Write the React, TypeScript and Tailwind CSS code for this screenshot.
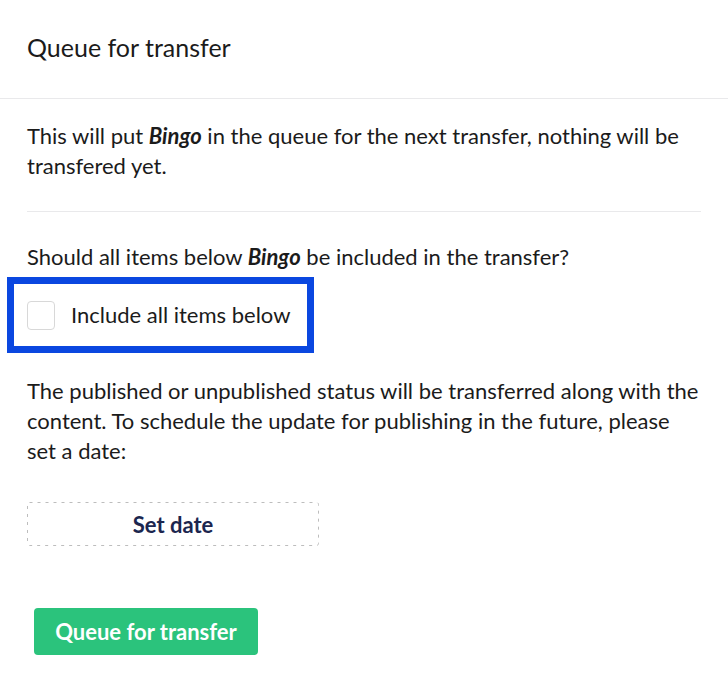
import { useState } from 'react';

export default function App() {
  const [includeAll, setIncludeAll] = useState(false);

  return (
    <div className="w-[728px] h-[675px] bg-white font-['Lato','Open_Sans',sans-serif] text-[#1b1b1b] overflow-hidden">
      <div className="h-[99px] flex items-center pl-[27px] pb-[4px] border-b border-[#e9e9eb]">
        <h1 className="text-[25px] leading-[30px] font-normal">Queue for transfer</h1>
      </div>

      <div className="px-[27px] pt-[22px]">
        <p className="text-[22px] leading-[30px]">
          This will put <b className="italic font-bold">Bingo</b> in the queue for the next transfer, nothing will be transfered yet.
        </p>

        <hr className="mt-[30px] border-0 border-t border-[#e9e9eb]" />

        <p className="mt-[30px] text-[22px] leading-[30px]">
          Should all items below <b className="italic font-bold">Bingo</b> be included in the transfer?
        </p>

        {/* checkbox row with tour highlight over it */}
        <div className="relative mt-[5px] h-[76px] flex items-center">
          <label className="flex items-center cursor-pointer">
            <input
              type="checkbox"
              checked={includeAll}
              onChange={e => setIncludeAll(e.target.checked)}
              className="appearance-none w-[28px] h-[29px] rounded-[4px] border border-[#d8d8d8] bg-white"
            />
            <span className="ml-[16px] text-[22px] leading-[30px]">Include all items below</span>
          </label>
          <div className="pointer-events-none absolute left-[-20px] top-0 w-[307px] h-[76px] border-[7px] border-[#0a47e0]" />
        </div>

        <p className="mt-[23px] text-[22px] leading-[30px]">
          The published or unpublished status will be transferred along with the content. To schedule the update for publishing in the future, please set a date:
        </p>

        <button className="relative mt-[36px] w-[292px] h-[44px] text-[22px] font-bold text-[#1b264f]">
          <svg className="absolute inset-0 pointer-events-none" width="292" height="44">
            <rect x="0.5" y="0.5" width="291" height="43" rx="2" fill="none" stroke="#bdbdbd" strokeDasharray="3 5" />
          </svg>
          Set date
        </button>

        <div>
          <button className="mt-[62px] ml-[7px] w-[224px] h-[47px] rounded-[4px] bg-[#2bc37c] text-white text-[22px] font-bold">
            Queue for transfer
          </button>
        </div>
      </div>
    </div>
  );
}
